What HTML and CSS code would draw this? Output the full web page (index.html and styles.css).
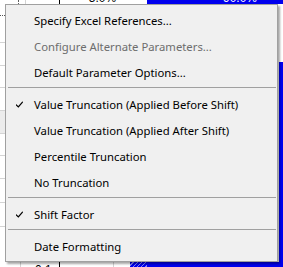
FILE: index.html
```html
<!DOCTYPE html>
<html>
<head>
<meta charset="utf-8">
<link rel="stylesheet" href="styles.css">
</head>
<body>
<div class="screen">
  <div class="sheet">
    <div class="sheet-top">
      <div class="cell w18"></div>
      <div class="cell mark"></div>
      <div class="cell w6 line-light"></div>
      <div class="cell w33 line-dark"></div>
      <div class="cell w87 num">5.0%</div>
      <div class="cell fill num blue-num">90.0%</div>
    </div>
    <div class="sheet-mid">
      <div class="left-strip">
        <div class="rl dotted h15"></div>
        <div class="rl h27"></div>
        <div class="rl h23"></div>
        <div class="rl h22"></div>
        <div class="rl h23"></div>
        <div class="rl h23 shade"></div>
        <div class="rl h22"></div>
        <div class="rl h23"></div>
        <div class="rl h24"></div>
        <div class="rl h24"></div>
      </div>
      <div class="mid-space"></div>
      <div class="right-strip">
        <div class="rs-white"></div>
        <div class="rs-blue"></div>
      </div>
    </div>
    <div class="sheet-bottom">
      <div class="cell b20 line-light"></div>
      <div class="cell b38 line-dark num-b">0.1</div>
      <div class="cell b53 line-light"></div>
      <div class="cell b16"></div>
      <div class="cell hatch"></div>
      <div class="cell fill blue"></div>
    </div>
  </div>

  <div class="menu">
    <div class="item">Specify Excel References...</div>
    <div class="item disabled">Configure Alternate Parameters...</div>
    <div class="item">Default Parameter Options...</div>
    <div class="sep"></div>
    <div class="item"><svg class="check" width="7" height="7" viewBox="0 0 7 7"><polygon points="0,3 2.3,5 6.5,0.3 7,1.6 2.4,6.8 0,4.6" fill="#000"/></svg>Value Truncation (Applied Before Shift)</div>
    <div class="item">Value Truncation (Applied After Shift)</div>
    <div class="item">Percentile Truncation</div>
    <div class="item">No Truncation</div>
    <div class="sep"></div>
    <div class="item"><svg class="check" width="7" height="7" viewBox="0 0 7 7"><polygon points="0,3 2.3,5 6.5,0.3 7,1.6 2.4,6.8 0,4.6" fill="#000"/></svg>Shift Factor</div>
    <div class="sep"></div>
    <div class="item">Date Formatting</div>
  </div>
</div>
</body>
</html>
```
FILE: styles.css
```css
* { box-sizing: border-box; }
html, body { margin: 0; padding: 0; }
body { background: #fff; }

.screen {
  position: relative;
  width: 283px;
  height: 267px;
  overflow: hidden;
  background: #fff;
}

.sheet {
  display: flex;
  flex-direction: column;
  height: 267px;
  font-family: "Liberation Sans", Arial, sans-serif;
  font-size: 12px;
}

.sheet-top {
  display: flex;
  height: 4px;
  overflow: hidden;
  flex: none;
}
.cell { height: 100%; flex: none; }
.w18 { width: 18px; }
.mark { width: 1px; border-right: 1px dotted #606060; }
.w6 { width: 7px; }
.w33 { width: 34px; }
.w87 { width: 87px; }
.fill { flex: 1; }
.line-light { border-right: 1px solid #d4d4d4; }
.line-dark { border-right: 1px solid #000; }

.num {
  display: flex;
  align-items: flex-end;
  justify-content: center;
  line-height: 12px;
  color: #000;
}
.w87.num { padding-right: 2px; }
.blue-num {
  background: #0000ee;
  color: #fff;
  padding-left: 50px;
}

.sheet-mid {
  display: flex;
  flex: 1;
}
.left-strip {
  width: 5px;
  display: flex;
  flex-direction: column;
}
.rl { border-bottom: 1px solid #d4d4d4; flex: none; }
.rl.dotted { border-bottom: 1px dotted #555; }
.rl.shade { background: #ececec; }
.h15 { height: 12px; }
.h27 { height: 27px; }
.h23 { height: 23px; }
.h22 { height: 22px; }
.h24 { height: 24px; }
.mid-space { flex: 1; }
.right-strip {
  width: 4px;
  display: flex;
  flex-direction: column;
}
.rs-white { height: 58px; background: #fff; }
.rs-blue { flex: 1; background: #0000ee; }

.sheet-bottom {
  display: flex;
  height: 5px;
  flex: none;
  overflow: hidden;
}
.b20 { width: 21px; }
.b38 { width: 39px; }
.b53 { width: 54px; }
.b16 { width: 16px; }
.num-b {
  padding-left: 14px;
  padding-top: 2px;
  line-height: 12px;
  color: #000;
}
.hatch {
  width: 17px;
  background: repeating-linear-gradient(135deg, #0000ee 0 2px, #8080ff 2px 3px);
}
.blue { background: #0000ee; }

.menu {
  position: absolute;
  left: 5px;
  top: 4px;
  width: 273px;
  height: 258px;
  background: #f0f0f0;
  border: 1px solid #a0a0a0;
  box-shadow: 2px 2px 2px rgba(0, 0, 0, 0.35);
  padding: 2px 0;
  font-family: "Noto Sans", "Open Sans", sans-serif;
  font-size: 11.3px;
  color: #000;
}

.item {
  position: relative;
  height: 26px;
  line-height: 25px;
  padding-top: 1px;
  padding-left: 28px;
  white-space: nowrap;
}
.item.disabled { color: #6d6d6d; }

.check {
  position: absolute;
  left: 10px;
  top: 10px;
}

.sep {
  height: 6px;
  padding-top: 2px;
  margin: 0 1px 0 2px;
}
.sep::before {
  content: "";
  display: block;
  height: 1px;
  background: #a0a0a0;
}
```
